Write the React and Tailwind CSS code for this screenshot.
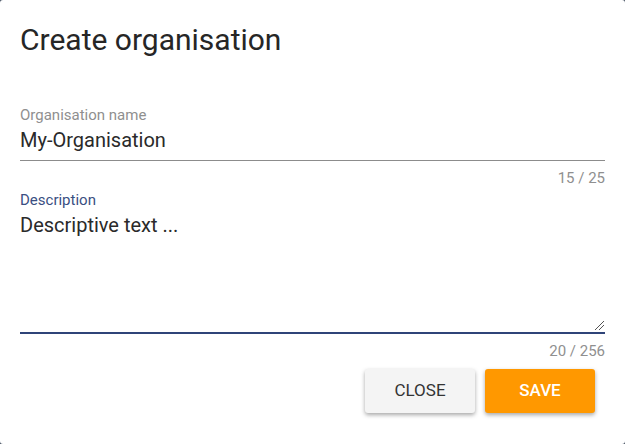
export default function App() {
  return (
    <div className="w-[625px] h-[444px] bg-gray-600 font-['Roboto',sans-serif]">
      <div className="w-full h-full bg-white rounded-[3px] px-5 pt-[22px] flex flex-col">
        <h1 className="text-[30px] leading-[36px] text-[#262626]">Create organisation</h1>

        {/* name field */}
        <div className="mt-[49px]">
          <label className="block text-[15px] leading-[16px] text-[#8f8f8f]">Organisation name</label>
          <div className="mt-[3px] text-[20px] leading-[28px] text-[#2a2a2a] border-b border-[#8c8c8c] pb-[6px]">
            My-Organisation
          </div>
          <div className="text-right text-[15px] leading-[16px] text-[#8f8f8f] mt-[9px]">15 / 25</div>
        </div>

        {/* description field */}
        <div className="mt-[6px]">
          <label className="block text-[15px] leading-[16px] text-[#3a4f82]">Description</label>
          <div className="relative mt-[3px] h-[123px] text-[20px] leading-[28px] text-[#2a2a2a] border-b-2 border-[#2f4478]">
            Descriptive text ...
            <svg className="absolute right-0 bottom-[1px]" width="11" height="11" viewBox="0 0 11 11">
              <line x1="1" y1="10" x2="10" y2="1" stroke="#555" strokeWidth="1" />
              <line x1="5" y1="10" x2="10" y2="5" stroke="#555" strokeWidth="1" />
            </svg>
          </div>
          <div className="text-right text-[15px] leading-[16px] text-[#8f8f8f] mt-[9px]">20 / 256</div>
        </div>

        <div className="flex justify-end gap-[10px] mt-[10px] pr-[10px]">
          <button className="w-[110px] h-[44px] bg-[#f4f4f4] rounded-[3px] text-[17px] text-[#333] shadow-[0_2px_4px_rgba(0,0,0,0.35)]">
            CLOSE
          </button>
          <button className="w-[110px] h-[44px] bg-[#ff9800] rounded-[3px] text-[17px] font-medium text-white shadow-[0_2px_4px_rgba(0,0,0,0.35)]">
            SAVE
          </button>
        </div>
      </div>
    </div>
  );
}
